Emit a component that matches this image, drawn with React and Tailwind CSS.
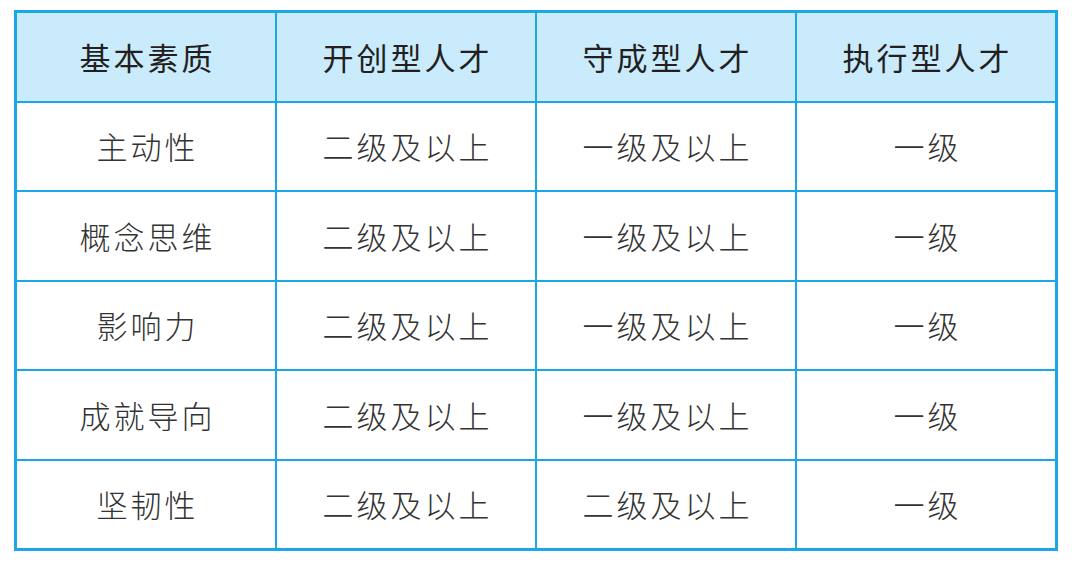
export default function App() {
  const header = ["基本素质", "开创型人才", "守成型人才", "执行型人才"];
  const rows = [
    ["主动性", "二级及以上", "一级及以上", "一级"],
    ["概念思维", "二级及以上", "一级及以上", "一级"],
    ["影响力", "二级及以上", "一级及以上", "一级"],
    ["成就导向", "二级及以上", "一级及以上", "一级"],
    ["坚韧性", "二级及以上", "二级及以上", "一级"],
  ];
  return (
    <div className="w-[1080px] h-[563px] bg-white pl-[14px] pt-[10px]" style={{ fontFamily: '"Noto Sans CJK SC", "Noto Sans", sans-serif' }}>
      <div className="w-[1044px] h-[541px] bg-[#1ba6e6] p-[3px] grid grid-cols-4 grid-rows-6 gap-[2px]">
        {header.map((h) => (
          <div key={h} className="bg-[#c9ebfb] flex items-center justify-center pl-[3px] text-[31px] font-normal text-[#231f20] tracking-[3px]">
            {h}
          </div>
        ))}
        {rows.map((r, i) =>
          r.map((c, j) => (
            <div key={i + "-" + j} className="bg-white flex items-center justify-center pl-[3px] text-[31px] font-light text-[#333] tracking-[3px]">
              {c}
            </div>
          ))
        )}
      </div>
    </div>
  );
}
